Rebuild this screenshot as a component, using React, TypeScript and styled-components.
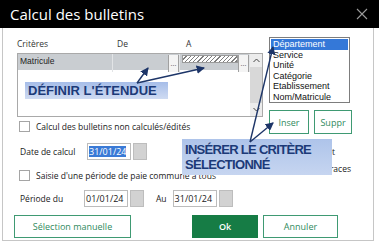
import styled, { createGlobalStyle } from 'styled-components'

const GlobalStyle = createGlobalStyle`
  html, body {
    margin: 0;
    padding: 0;
    background: #fff;
  }
  * {
    box-sizing: border-box;
  }
`

const criteria = ['Département', 'Service', 'Unité', 'Catégorie', 'Etablissement', 'Nom/Matricule']

const App = () => {
  return (
    <>
      <GlobalStyle />
      <Frame>
        <TitleBar>
          <Title>Calcul des bulletins</Title>
          <CloseButton>
            <svg width="12" height="12" viewBox="0 0 12 12">
              <path d="M1 1 L11 11 M11 1 L1 11" stroke="#9a9a9a" strokeWidth="1.1" />
            </svg>
          </CloseButton>
        </TitleBar>

        <Dialog>
          <UpperSection>
            <LeftColumn>
              <GridHeader>
                <HeaderCell>Critères</HeaderCell>
                <HeaderCell $indent={4}>De</HeaderCell>
                <HeaderCell $indent={6}>A</HeaderCell>
              </GridHeader>
              <GridBody>
                <Rows>
                  <GridRow>
                    <Cell>Matricule</Cell>
                    <Cell>
                      <EllipsisButton>...</EllipsisButton>
                    </Cell>
                    <Cell>
                      <HatchField />
                      <EllipsisButton>...</EllipsisButton>
                    </Cell>
                  </GridRow>
                </Rows>
                <Scrollbar>
                  <ScrollArrow>
                    <svg width="7" height="5" viewBox="0 0 7 5">
                      <path d="M0.5 4 L3.5 1 L6.5 4" stroke="#444" strokeWidth="1" fill="none" />
                    </svg>
                  </ScrollArrow>
                  <ScrollArrow>
                    <svg width="7" height="5" viewBox="0 0 7 5">
                      <path d="M0.5 1 L3.5 4 L6.5 1" stroke="#444" strokeWidth="1" fill="none" />
                    </svg>
                  </ScrollArrow>
                </Scrollbar>
              </GridBody>
              <CheckRow $top={3}>
                <Checkbox />
                <span>Calcul des bulletins non calculés/édités</span>
              </CheckRow>
            </LeftColumn>

            <RightColumn>
              <ListBox>
                {criteria.map((c, i) => (
                  <ListItem key={c} $selected={i === 0}>{c}</ListItem>
                ))}
              </ListBox>
              <ActionRow>
                <OutlineButton $width={40} $height={24}>Inser</OutlineButton>
                <OutlineButton $width={38} $height={24}>Suppr</OutlineButton>
              </ActionRow>
            </RightColumn>
          </UpperSection>

          <FieldRow $top={9}>
            <FieldLabel $width={70}>Date de calcul</FieldLabel>
            <DateInput>
              <SelectedText>31/01/24</SelectedText>
            </DateInput>
            <PickerButton />
            <NoteBlock>
              <NoteLine $pad={16}>Recalcul des bulletins édités et</NoteLine>
              <NoteLine $pad={0}>suppression des traces</NoteLine>
            </NoteBlock>
          </FieldRow>

          <CheckRow $top={9}>
            <Checkbox />
            <span>Saisie d'une période de paie commune à tous</span>
          </CheckRow>

          <FieldRow $top={9}>
            <FieldLabel $width={67}>Période du</FieldLabel>
            <DateInput>01/01/24</DateInput>
            <PickerButton />
            <AuLabel>Au</AuLabel>
            <DateInput>31/01/24</DateInput>
            <PickerButton />
          </FieldRow>

          <ButtonRow>
            <OutlineButton $width={117} $height={23}>Sélection manuelle</OutlineButton>
            <OkButton>Ok</OkButton>
            <OutlineButton $width={75} $height={23}>Annuler</OutlineButton>
          </ButtonRow>
        </Dialog>

        <ExtentCallout>DÉFINIR L'ÉTENDUE</ExtentCallout>
        <InsertCallout>
          INSÉRER LE CRITÈRE
          <br />
          SÉLECTIONNÉ
        </InsertCallout>

        <ArrowLayer width="379" height="244" viewBox="0 0 379 244">
          <defs>
            <marker id="head" viewBox="0 0 8 8" refX="7" refY="4" markerWidth="6" markerHeight="6" orient="auto">
              <path d="M0 0 L8 4 L0 8 Z" fill="#1d3568" />
            </marker>
          </defs>
          <g stroke="#1d3568" strokeWidth="1.4" fill="none" markerEnd="url(#head)">
            <line x1="137" y1="83" x2="148" y2="68" />
            <line x1="137" y1="83" x2="204" y2="68" />
            <line x1="250" y1="142" x2="273" y2="47" />
            <line x1="250" y1="142" x2="273" y2="123" />
          </g>
        </ArrowLayer>
      </Frame>
    </>
  )
}

export default App


const Frame = styled.div`
  position: relative;
  width: 379px;
  height: 244px;
  overflow: hidden;
  background: #fff;
  font-family: 'Open Sans', 'Noto Sans', sans-serif;
  font-size: 8.5px;
  color: #1a1a1a;
`

const TitleBar = styled.div`
  height: 28px;
  background: #000;
  display: flex;
  align-items: center;
  justify-content: space-between;
  padding: 0 9px 0 10px;
`

const Title = styled.span`
  color: #fff;
  font-size: 15px;
`

const CloseButton = styled.div`
  width: 12px;
  height: 12px;
  display: flex;
  margin-right: 2px;
`

const Dialog = styled.div`
  height: 213px;
  margin: 0 5px 0 2px;
  border: 1px solid #c6c6c6;
  border-top: none;
  padding: 5px 0 0 14px;
  display: flex;
  flex-direction: column;
`

const UpperSection = styled.div`
  display: flex;
  align-items: flex-start;
`

const LeftColumn = styled.div`
  width: 246px;
  display: flex;
  flex-direction: column;
`

const GridHeader = styled.div`
  height: 20px;
  display: grid;
  grid-template-columns: 96px 67px 70px 13px;
  align-items: center;
`

const HeaderCell = styled.div<{ $indent?: number }>`
  padding-left: ${p => p.$indent ?? 0}px;
  color: #333;
`

const GridBody = styled.div`
  height: 64px;
  border: 1px solid #a9a9a9;
  display: flex;
`

const Rows = styled.div`
  flex: 1;
`

const GridRow = styled.div`
  height: 16px;
  display: grid;
  grid-template-columns: 95px 67px 70px;
  background: #c9cdd1;
`

const Cell = styled.div`
  display: flex;
  align-items: stretch;
  padding-left: 2px;
  border-right: 1px solid #e2e4e6;
  font-family: 'Liberation Sans', Arial, sans-serif;
  font-size: 8.5px;
  line-height: 15px;
  color: #222;
`

const EllipsisButton = styled.div`
  width: 11px;
  margin: 1px 0 0 auto;
  background: #f4f4f4;
  border-left: 1px solid #a0a0a0;
  border-right: 1px solid #a0a0a0;
  font-size: 7px;
  line-height: 17px;
  text-align: center;
  color: #333;
`

const HatchField = styled.div`
  flex: 1;
  height: 8px;
  margin-top: 1px;
  border: 1px solid #9a9a9a;
  background: repeating-linear-gradient(135deg, #fff 0 2px, #7e7e7e 2px 3px);
`

const Scrollbar = styled.div`
  width: 13px;
  background: #d8d8d8;
  display: flex;
  flex-direction: column;
  justify-content: space-between;
`

const ScrollArrow = styled.div`
  height: 13px;
  display: flex;
  align-items: center;
  justify-content: center;
  background: #ececec;
`

const CheckRow = styled.div<{ $top: number }>`
  margin-top: ${p => p.$top}px;
  height: 12px;
  display: flex;
  align-items: center;
  gap: 6px;
  padding-left: 2px;
`

const Checkbox = styled.div`
  width: 11px;
  height: 11px;
  border: 1px solid #a5a5a5;
  background: #fff;
`

const RightColumn = styled.div`
  margin-left: 6px;
  padding-top: 4px;
  display: flex;
  flex-direction: column;
`

const ListBox = styled.div`
  width: 81px;
  height: 66px;
  border: 1px solid #7d7d7d;
  padding: 1px;
  font-family: 'Liberation Sans', Arial, sans-serif;
  font-size: 9px;
`

const ListItem = styled.div<{ $selected: boolean }>`
  height: 10.5px;
  line-height: 10.5px;
  padding-left: 2px;
  background: ${p => (p.$selected ? '#3478d8' : 'transparent')};
  color: ${p => (p.$selected ? '#fff' : '#111')};
`

const ActionRow = styled.div`
  margin-top: 7px;
  display: flex;
  gap: 5px;
`

const OutlineButton = styled.div<{ $width: number; $height: number }>`
  width: ${p => p.$width}px;
  height: ${p => p.$height}px;
  border: 1px solid #3f9a73;
  background: #fff;
  color: #2f8a5d;
  font-size: 9px;
  display: flex;
  align-items: center;
  justify-content: center;
`

const OkButton = styled.div`
  width: 66px;
  height: 23px;
  margin: 0 5px 0 61px;
  background: #167c45;
  color: #fff;
  font-size: 9px;
  font-weight: 600;
  display: flex;
  align-items: center;
  justify-content: center;
`

const FieldRow = styled.div<{ $top: number }>`
  margin-top: ${p => p.$top}px;
  height: 17px;
  display: flex;
  align-items: center;
`

const FieldLabel = styled.div<{ $width: number }>`
  width: ${p => p.$width}px;
  padding-left: 3px;
`

const DateInput = styled.div`
  width: 44px;
  height: 17px;
  border: 1px solid #bcbcbc;
  padding-left: 1px;
  font-size: 9px;
  display: flex;
  align-items: center;
`

const SelectedText = styled.span`
  background: #3a7ad6;
  color: #fff;
  line-height: 11px;
`

const PickerButton = styled.div`
  width: 14px;
  height: 17px;
  margin-left: 2px;
  background: #d2d2d2;
  border: 1px solid #bdbdbd;
`

const AuLabel = styled.div`
  margin: 0 6px 0 12px;
`

const NoteBlock = styled.div`
  align-self: flex-start;
  margin-left: auto;
  margin-right: 22px;
  height: 17px;
  text-align: right;
  white-space: nowrap;
`

const NoteLine = styled.div<{ $pad: number }>`
  line-height: 17px;
  padding-right: ${p => p.$pad}px;
`

const ButtonRow = styled.div`
  margin: 8px 0 0 -3px;
  display: flex;
  align-items: center;
`

const Callout = styled.div`
  position: absolute;
  font-family: 'Liberation Sans', Arial, sans-serif;
  font-weight: bold;
  font-size: 13px;
  color: #1c3a78;
  padding-left: 3px;
`

const ExtentCallout = styled(Callout)`
  left: 25px;
  top: 82px;
  width: 143px;
  height: 17px;
  line-height: 17px;
  background: linear-gradient(#a6bde8, #cfdbf2);
`

const InsertCallout = styled(Callout)`
  left: 182px;
  top: 139px;
  width: 150px;
  height: 36px;
  line-height: 15px;
  padding-top: 3px;
  letter-spacing: -0.7px;
  background: linear-gradient(#aec4ea, #c6d5f0);
`

const ArrowLayer = styled.svg`
  position: absolute;
  left: 0;
  top: 0;
  pointer-events: none;
`
